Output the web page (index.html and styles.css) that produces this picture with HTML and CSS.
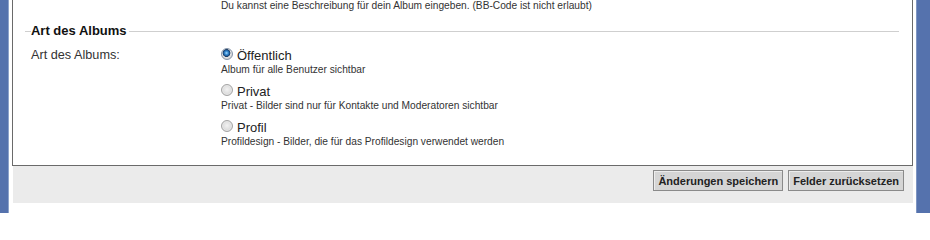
FILE: index.html
```html
<!DOCTYPE html>
<html lang="de">
<head>
<meta charset="utf-8">
<title>Art des Albums</title>
<link rel="stylesheet" href="styles.css">
</head>
<body>
<div class="side side-left"></div>
<div class="main">
  <div class="panel">
    <div class="row top-row">
      <div class="label"></div>
      <div class="value"><p class="desc">Du kannst eine Beschreibung für dein Album eingeben. (BB-Code ist nicht erlaubt)</p></div>
    </div>
    <div class="legend"><span>Art des Albums</span></div>
    <div class="row">
      <div class="label">Art des Albums:</div>
      <div class="value">
        <div class="option">
          <label class="opt-title"><input type="radio" name="type" checked><span>Öffentlich</span></label>
          <p class="desc">Album für alle Benutzer sichtbar</p>
        </div>
        <div class="option">
          <label class="opt-title"><input type="radio" name="type"><span>Privat</span></label>
          <p class="desc">Privat - Bilder sind nur für Kontakte und Moderatoren sichtbar</p>
        </div>
        <div class="option">
          <label class="opt-title"><input type="radio" name="type"><span>Profil</span></label>
          <p class="desc">Profildesign - Bilder, die für das Profildesign verwendet werden</p>
        </div>
      </div>
    </div>
  </div>
  <div class="footer">
    <button class="btn" type="button">Änderungen speichern</button>
    <button class="btn" type="button">Felder zurücksetzen</button>
  </div>
</div>
<div class="side side-right"></div>
</body>
</html>
```

FILE: styles.css
```css
html, body {
  margin: 0;
  padding: 0;
  background: #ffffff;
  height: 213px;
  overflow: hidden;
}
body {
  display: flex;
  font-family: "Liberation Sans", Arial, sans-serif;
  color: #333333;
}
.side {
  background: #5572ad;
}
.side-left {
  width: 8px;
  border-right: 1px solid #8ea3cb;
}
.side-right {
  width: 13px;
  margin-left: 3px;
  border-left: 1px solid #7e95c2;
}
.main {
  width: 902px;
  margin-left: 3px;
}
.panel {
  border-left: 1px solid #6a6a6a;
  border-right: 1px solid #6a6a6a;
  border-bottom: 1px solid #6a6a6a;
  padding: 0 0 15px 18px;
  height: 150px;
}
.row {
  display: flex;
}
.label {
  width: 190px;
  flex: none;
  font-size: 12.7px;
  line-height: 16px;
  color: #333333;
}
.value {
  flex: 1;
}
.desc {
  margin: 0;
  font-size: 10.2px;
  line-height: 14px;
  color: #333333;
}
.top-row .desc {
  line-height: 12px;
}
.legend {
  display: flex;
  align-items: center;
  margin: 11px 13px 0 -6px;
  height: 16px;
}
.legend::before {
  content: "";
  width: 6px;
  height: 1px;
  background: #cfcfcf;
}
.legend::after {
  content: "";
  flex: 1;
  height: 1px;
  background: #cfcfcf;
}
.legend span {
  font-weight: bold;
  font-size: 13px;
  line-height: 16px;
  color: #111111;
  padding-right: 2px;
}
.legend + .row {
  margin-top: 8px;
}
.option + .option {
  margin-top: 6px;
}
.opt-title {
  display: flex;
  align-items: center;
  height: 16px;
  font-size: 13px;
  color: #222222;
}
.opt-title input {
  appearance: none;
  -webkit-appearance: none;
  width: 12px;
  height: 12px;
  margin: -2px 4px 0 0;
  border-radius: 50%;
  border: 1px solid #a4a4a4;
  background: radial-gradient(circle at 50% 45%, #f2f2f2 0%, #dedede 55%, #c6c6c6 100%);
  box-shadow: inset 0 0 0 1px #e8e8e8;
  box-sizing: border-box;
  flex: none;
}
.opt-title input:checked {
  border-color: #8494a8;
  box-shadow: none;
  background:
    radial-gradient(circle at 45% 40%, #a8dcff 0px, #3a8fd4 1.6px, #1f5fa0 2.8px, #16365e 3.6px, #e6e6e6 4.2px, #d0d0d0 6px);
}
.footer {
  display: flex;
  justify-content: flex-end;
  gap: 5px;
  background: #ebebeb;
  margin-left: 1px;
  width: 900px;
  padding: 4px 9px 11px 0;
  box-sizing: border-box;
  height: 37px;
}
.btn {
  font-family: "Liberation Sans", Arial, sans-serif;
  font-weight: bold;
  font-size: 11px;
  color: #222222;
  height: 21px;
  margin: 0;
  padding: 0 4px;
  background: #d5d5d5;
  border: 1px solid #8a8a8a;
  box-shadow: inset 1px 1px 0 #ececec;
  border-radius: 0;
  cursor: pointer;
}
```
